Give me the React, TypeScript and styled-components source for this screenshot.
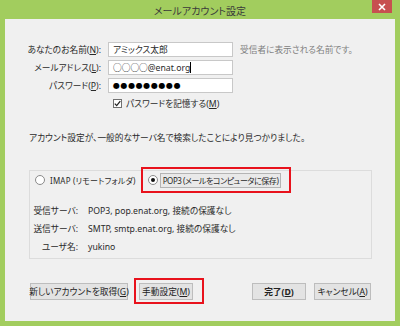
import styled, { createGlobalStyle } from 'styled-components';

const GlobalStyle = createGlobalStyle`
  html, body {
    margin: 0;
    padding: 0;
    background: #a2cd5e;
  }
  body {
    font-family: 'Noto Sans', 'Noto Sans CJK JP', sans-serif;
    font-feature-settings: 'palt';
  }
`;

const App = () => {
  return (
    <Window>
      <GlobalStyle />
      <TitleBar>
        <Title>メールアカウント設定</Title>
        <CloseButton>
          <svg width='8' height='8' viewBox='0 0 8 8'>
            <path d='M1 1 L7 7 M7 1 L1 7' stroke='#fff' strokeWidth='1.6' />
          </svg>
        </CloseButton>
      </TitleBar>

      <Client>
        <FormGrid>
          <Label>
            あなたのお名前(<U>N</U>):
          </Label>
          <TextBox>アミックス太郎</TextBox>
          <Hint>受信者に表示される名前です。</Hint>

          <Label>
            メールアドレス(<U>L</U>):
          </Label>
          <TextBox>
            <span>○○○○@enat.org</span>
            <Caret />
          </TextBox>
          <span />

          <Label>
            パスワード(<U>P</U>):
          </Label>
          <TextBox>
            <Dots>●●●●●●●●●</Dots>
          </TextBox>
          <span />

          <CheckRow>
            <CheckBox>
              <svg width='7' height='7' viewBox='0 0 7 7'>
                <path
                  d='M0.8 3.6 L2.7 5.6 L6.3 1.2'
                  stroke='#222'
                  strokeWidth='1.3'
                  fill='none'
                />
              </svg>
            </CheckBox>
            <span>
              パスワードを記憶する(<U>M</U>)
            </span>
          </CheckRow>
        </FormGrid>

        <Message>
          アカウント設定が、一般的なサーバ名で検索したことにより見つかりました。
        </Message>

        <GroupBox>
          <RadioRow>
            <RadioOption>
              <Radio />
              <RadioText>IMAP (リモートフォルダ)</RadioText>
            </RadioOption>
            <Highlighted>
              <RadioOption>
                <Radio $checked />
                <RadioText $focused>POP3 (メールをコンピュータに保存)</RadioText>
              </RadioOption>
            </Highlighted>
          </RadioRow>

          <InfoGrid>
            <InfoLabel>受信サーバ:</InfoLabel>
            <span>POP3, pop.enat.org, 接続の保護なし</span>
            <InfoLabel>送信サーバ:</InfoLabel>
            <span>SMTP, smtp.enat.org, 接続の保護なし</span>
            <InfoLabel>ユーザ名:</InfoLabel>
            <span>yukino</span>
          </InfoGrid>
        </GroupBox>

        <ButtonBar>
          <Button $width={98}>
            <span>
              新しいアカウントを取得(<U>G</U>)
            </span>
          </Button>
          <HighlightButton>
            <Button $width={54}>
              <span>
                手動設定(<U>M</U>)
              </span>
            </Button>
          </HighlightButton>
          <Spacer />
          <Button $width={54} $bold>
            <span>
              完了(<U>D</U>)
            </span>
          </Button>
          <Button $width={57}>
            <span>
              キャンセル(<U>A</U>)
            </span>
          </Button>
        </ButtonBar>
      </Client>
    </Window>
  );
};

export default App;

const Window = styled.div`
  width: 400px;
  height: 326px;
  display: flex;
  flex-direction: column;
  background: #a2cd5e;
  overflow: hidden;
`;

const TitleBar = styled.div`
  height: 19px;
  display: flex;
  align-items: center;
  justify-content: center;
  position: relative;
`;

const Title = styled.div`
  font-size: 10px;
  color: #3a3a3a;
  margin-top: 1px;
`;

const CloseButton = styled.div`
  position: absolute;
  top: 0;
  right: 8px;
  width: 20px;
  height: 13px;
  background: #c75050;
  display: flex;
  align-items: center;
  justify-content: center;
`;

const Client = styled.div`
  flex: 1;
  margin: 0 5px 5px;
  background: #f0f0f0;
  display: flex;
  flex-direction: column;
  padding-top: 23px;
  font-size: 8.7px;
  color: #2a2a2a;
`;

const FormGrid = styled.div`
  display: grid;
  grid-template-columns: 96px 125px auto;
  column-gap: 7px;
  row-gap: 3px;
  align-items: center;
`;

const Label = styled.div`
  text-align: right;
  white-space: nowrap;
`;

const U = styled.span`
  text-decoration: underline;
`;

const TextBox = styled.div`
  height: 15px;
  box-sizing: border-box;
  border: 1px solid #c8c8c8;
  background: #fff;
  padding: 0 4px;
  display: flex;
  align-items: center;
  white-space: nowrap;
`;

const Caret = styled.span`
  width: 1px;
  height: 11px;
  background: #000;
`;

const Dots = styled.span`
  font-family: 'DejaVu Sans', sans-serif;
  font-size: 8px;
  letter-spacing: 0.6px;
  color: #000;
`;

const Hint = styled.div`
  color: #808080;
  white-space: nowrap;
`;

const CheckRow = styled.label`
  grid-column: 2 / 4;
  display: flex;
  align-items: center;
  gap: 4px;
  margin-left: 5px;
  margin-top: 1px;
  white-space: nowrap;
`;

const CheckBox = styled.span`
  width: 9px;
  height: 9px;
  box-sizing: border-box;
  border: 1px solid #707070;
  background: #fff;
  display: flex;
  align-items: center;
  justify-content: center;
`;

const Message = styled.div`
  margin: 21px 0 0 24px;
  white-space: nowrap;
`;

const GroupBox = styled.div`
  margin: 26px 23px 0 24px;
  height: 89px;
  box-sizing: border-box;
  border: 1px solid #dcdcdc;
  display: flex;
  flex-direction: column;
`;

const RadioRow = styled.div`
  display: flex;
  align-items: center;
  gap: 9px;
  padding: 0 0 0 5px;
  height: 18px;
`;

const RadioOption = styled.div`
  display: flex;
  align-items: center;
  gap: 2px;
  white-space: nowrap;
`;

const RadioText = styled.span<{ $focused?: boolean }>`
  font-size: 8px;
  letter-spacing: ${(p) => (p.$focused ? '-0.45px' : '0.2px')};
  padding: 1px 2px;
  border: 1px solid ${(p) => (p.$focused ? '#b4b4b4' : 'transparent')};
  background: ${(p) => (p.$focused ? '#e9e9e9' : 'transparent')};
`;

const Radio = styled.span<{ $checked?: boolean }>`
  width: 10px;
  height: 10px;
  box-sizing: border-box;
  border-radius: 50%;
  border: 1px solid #8a8a8a;
  background: #fff;
  display: flex;
  align-items: center;
  justify-content: center;
  &::after {
    content: '';
    display: ${(p) => (p.$checked ? 'block' : 'none')};
    width: 4px;
    height: 4px;
    border-radius: 50%;
    background: #111;
  }
`;

const Highlighted = styled.div`
  position: relative;
  &::after {
    content: '';
    position: absolute;
    inset: -6px -10px -5px -7px;
    border: 2px solid #e8121c;
  }
`;

const InfoGrid = styled.div`
  display: grid;
  grid-template-columns: 48px auto;
  column-gap: 10px;
  row-gap: 5px;
  margin-top: 16px;
  line-height: 13px;
  white-space: nowrap;
`;

const InfoLabel = styled.span`
  text-align: right;
`;

const ButtonBar = styled.div`
  display: flex;
  align-items: center;
  gap: 8px;
  margin: 24px 24px 0 25px;
`;

const Spacer = styled.div`
  flex: 1;
`;

const Button = styled.div<{ $width: number; $bold?: boolean }>`
  width: ${(p) => p.$width}px;
  height: 17px;
  box-sizing: border-box;
  border: 1px solid #bdbdbd;
  background: #e3e3e3;
  display: flex;
  align-items: center;
  justify-content: center;
  white-space: nowrap;
  font-weight: ${(p) => (p.$bold ? 700 : 400)};
  color: #222;
`;

const HighlightButton = styled.div`
  position: relative;
  margin-left: 3px;
  &::after {
    content: '';
    position: absolute;
    inset: -5px -11px -4px -5px;
    border: 2px solid #e8121c;
  }
`;
